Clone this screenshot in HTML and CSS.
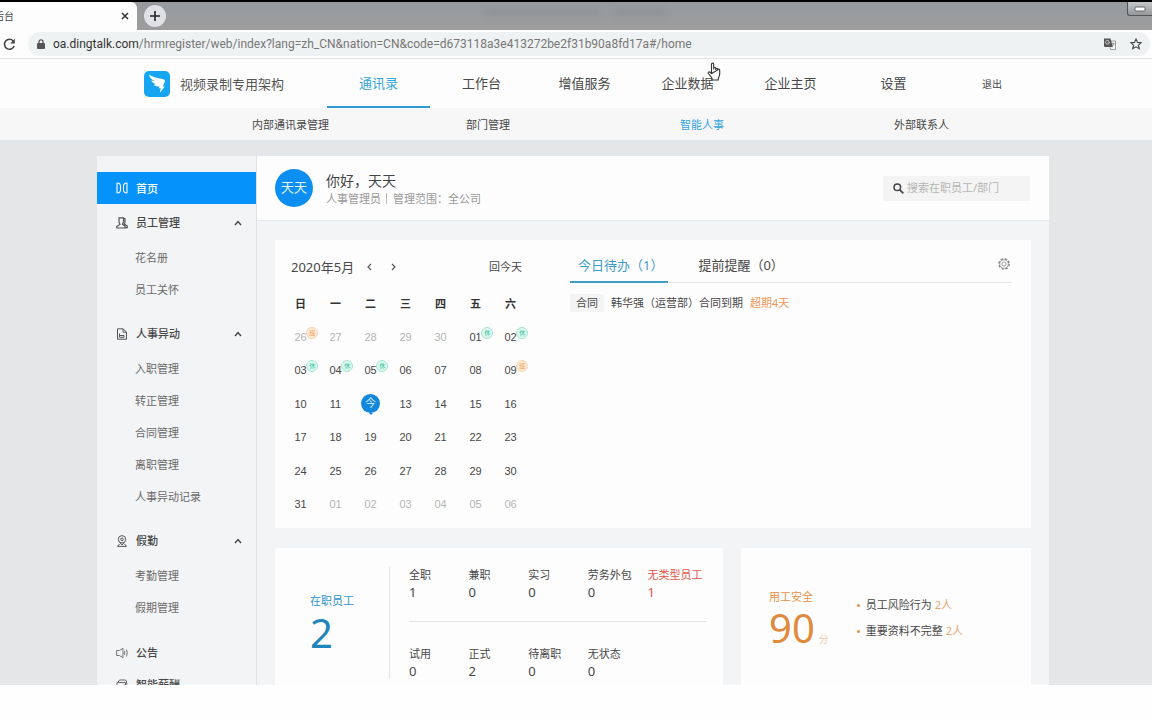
FILE: index.html
```html
<!DOCTYPE html>
<html lang="zh-CN">
<head>
<meta charset="utf-8">
<title>后台</title>
<link rel="stylesheet" href="styles.css">
</head>
<body>
<div class="titlebar">
  <div class="browser-tab">
    <span class="browser-tab-title">后台</span>
    <button class="icon-btn" aria-label="关闭标签页"><svg width="8" height="8" viewBox="0 0 8 8"><path d="M1 1l6 6M7 1l-6 6" stroke="#333" stroke-width="1.5"/></svg></button>
  </div>
  <button class="new-tab" aria-label="新标签页"><svg width="10" height="10" viewBox="0 0 10 10"><path d="M5 0v10M0 5h10" stroke="#222" stroke-width="1.6"/></svg></button>
  <div class="glass"><i class="smudge smudge-wide"></i><i class="smudge"></i></div>
  <button class="win-min" aria-label="最小化"><svg width="12" height="6" viewBox="0 0 12 6"><rect x="1" y="1" width="10" height="4" rx="1" fill="#fff" stroke="#666"/></svg></button>
</div>
<div class="toolbar">
  <button class="icon-btn" aria-label="重新加载"><svg width="13" height="13" viewBox="0 0 13 13"><path d="M10.300 3A5 5 0 1 0 11.200 8" fill="none" stroke="#444" stroke-width="1.600"/><path d="M11.800 .8v4.600H7.200z" fill="#444"/></svg></button>
  <div class="address">
    <svg width="8" height="10" viewBox="0 0 8 10"><rect y="4" width="8" height="6" rx="1" fill="#555"/><path d="M2 4.500V2.800a2 2 0 0 1 4 0v1.700" fill="none" stroke="#555" stroke-width="1.300"/></svg>
    <span class="url"><b>oa.dingtalk.com</b>/hrmregister/web/index?lang=zh_CN&amp;nation=CN&amp;code=d673118a3e413272be2f31b90a8fd17a#/home</span>
    <button class="icon-btn" aria-label="翻译"><svg width="12" height="12" viewBox="0 0 12 12"><path d="M5 3h6.500v8.500H6.500z" fill="#f5f5f5" stroke="#888" stroke-width=".8"/><path d="M0 .5h6.500L9 9H1Q0 9 0 8z" fill="#555"/><path d="M5.500 4H3.800M5.400 4.200A1.900 1.900 0 1 1 4.900 3" fill="none" stroke="#eee" stroke-width=".8"/><path d="M7.500 5.500h3M9 4.800v.8M8 8.500Q9.800 7.500 10 5.600" fill="none" stroke="#777" stroke-width=".7"/></svg></button>
    <button class="icon-btn" aria-label="收藏"><svg width="12" height="12" viewBox="0 0 12 12"><path d="M6 1l1.500 3.400 3.700.3-2.800 2.400.9 3.600L6 8.800l-3.300 1.900.9-3.600L.8 4.700l3.700-.3z" fill="none" stroke="#444" stroke-width="1.100"/></svg></button>
  </div>
</div>
<header class="site-header">
  <div class="brand">
    <svg width="26" height="26" viewBox="0 0 26 26"><rect width="26" height="26" rx="5" fill="#16a5f0"/><path d="M5 3.500Q9 6.500 19.500 8.200Q21.500 8.800 20.800 11L18.700 15.500h2.100L15.800 22l1-4.800h-2.200l.9-1.800Q10.800 15.800 9.800 13.400L12.300 13.200Q8 12 7.300 9.500L10.800 10Q5.500 7.500 5 3.500z" fill="#fff"/></svg>
    <span>视频录制专用架构</span>
  </div>
  <nav class="main-nav">
    <a class="active" href="#">通讯录</a><a href="#">工作台</a><a href="#">增值服务</a><a href="#">企业数据</a><a href="#">企业主页</a><a href="#">设置</a>
  </nav>
  <a class="logout" href="#">退出</a>
  <svg class="pointer" width="14" height="19" viewBox="0 0 14 19"><path d="M4.500 11V2.200a1.100 1.100 0 0 1 2.200 0V7.500M6.700 7V6.300a1 1 0 0 1 2 0V8M8.700 7.200a1 1 0 0 1 2 0V8.500M10.700 8a1 1 0 0 1 2 .3V12Q12.700 14.500 11.300 16V18H5V16L1.200 11.300a1.100 1.100 0 0 1 1.600-1.300L4.500 11.500z" fill="#fff" stroke="#333" stroke-width="1.100"/></svg>
</header>
<nav class="sub-nav">
  <a href="#">内部通讯录管理</a><a href="#">部门管理</a><a class="active" href="#">智能人事</a><a href="#">外部联系人</a>
</nav>
<main class="workspace">
  <div class="shell">
    <aside class="sidebar">
      <a class="home" href="#"><svg class="side-icon" viewBox="0 0 12 12"><path d="M1 1.200Q3.800.5 4.500 3.500V8.500Q3.800 11.500 1 10.800zM11 1.200Q8.200.5 7.500 3.500V8.500Q8.200 11.500 11 10.800z" fill="none" stroke="#fff" stroke-width="1.100"/></svg><span>首页</span></a>
      <section class="group">
        <button class="group-head"><svg class="side-icon" viewBox="0 0 12 12"><path d="M3 .8h4.500v4L6.500 7.300 9 9v2H.8V9.300L4 7.500 3 5zM7.500 1.500H9v4L8.300 7l3 2v1.700H9" fill="none" stroke="#555" stroke-width="1.200"/></svg><span>员工管理</span><svg class="chev" viewBox="0 0 8 6"><path d="M1 5l3-3.500L7 5" fill="none" stroke="#444" stroke-width="1.400"/></svg></button>
        <a href="#">花名册</a><a href="#">员工关怀</a>
      </section>
      <section class="group">
        <button class="group-head"><svg class="side-icon" viewBox="0 0 12 12"><path d="M1.500.8H7L10.500 4v7.200h-9zM7 1v3.200h3.300M3.500 9.300V5.500M3.500 7.500H8v1.800H3.500" fill="none" stroke="#555"/></svg><span>人事异动</span><svg class="chev" viewBox="0 0 8 6"><path d="M1 5l3-3.500L7 5" fill="none" stroke="#444" stroke-width="1.400"/></svg></button>
        <a href="#">入职管理</a><a href="#">转正管理</a><a href="#">合同管理</a><a href="#">离职管理</a><a href="#">人事异动记录</a>
      </section>
      <section class="group">
        <button class="group-head"><svg class="side-icon" viewBox="0 0 12 12"><circle cx="6" cy="4.300" r="3.700" fill="none" stroke="#555"/><circle cx="6" cy="4.300" r="1.300" fill="none" stroke="#555"/><path d="M3.800 7.500L6 10l2.200-2.500M3.500 9L1.500 11.400h9L8.500 9" fill="none" stroke="#555"/></svg><span>假勤</span><svg class="chev" viewBox="0 0 8 6"><path d="M1 5l3-3.500L7 5" fill="none" stroke="#444" stroke-width="1.400"/></svg></button>
        <a href="#">考勤管理</a><a href="#">假期管理</a>
      </section>
      <section class="singles">
        <button class="group-head"><svg class="side-icon" viewBox="0 0 12 12"><path d="M.6 3.500h2.800L7 1.300v9.400L3.400 8.500H.6zM8.700 4v4M10.500 2.500Q12 6 10.500 9.500" fill="none" stroke="#777"/></svg><span>公告</span></button>
        <button class="group-head"><svg class="side-icon" viewBox="0 0 12 12"><path d="M1 11V3.500h8.500V11zM2 3.200L3.500 1H9.500Q10.800 1 10.800 5M7.500 6h3.700v3H7.500z" fill="none" stroke="#666"/></svg><span>智能薪酬</span></button>
      </section>
    </aside>
    <div class="content">
      <div class="greeting">
        <div class="avatar">天天</div>
        <div class="hello"><h1>你好，天天</h1><p><span>人事管理员</span><span class="scope">管理范围：全公司</span></p></div>
        <label class="search"><svg width="11" height="11" viewBox="0 0 11 11"><circle cx="4.300" cy="4.300" r="3.300" fill="none" stroke="#444" stroke-width="1.500"/><path d="M6.800 6.800l3.500 3.500" stroke="#444" stroke-width="1.800"/></svg><input type="text" placeholder="搜索在职员工/部门" aria-label="搜索在职员工/部门"></label>
      </div>
      <div class="board">
        <section class="card agenda">
          <div class="calendar">
            <div class="cal-head">
              <span>2020年5月</span>
              <button class="icon-btn" aria-label="上个月"><svg width="5" height="8" viewBox="0 0 5 8"><path d="M4 1L1 4l3 3" fill="none" stroke="#555" stroke-width="1.200"/></svg></button>
              <button class="icon-btn" aria-label="下个月"><svg width="5" height="8" viewBox="0 0 5 8"><path d="M1 1l3 3-3 3" fill="none" stroke="#555" stroke-width="1.200"/></svg></button>
              <button class="back-today">回今天</button>
            </div>
            <table class="days">
              <thead><tr><th>日</th><th>一</th><th>二</th><th>三</th><th>四</th><th>五</th><th>六</th></tr></thead>
              <tbody>
                <tr><td class="out"><span class="day">26<i class="mark work">班</i></span></td><td class="out">27</td><td class="out">28</td><td class="out">29</td><td class="out">30</td><td><span class="day">01<i class="mark rest">休</i></span></td><td><span class="day">02<i class="mark rest">休</i></span></td></tr>
                <tr><td><span class="day">03<i class="mark rest">休</i></span></td><td><span class="day">04<i class="mark rest">休</i></span></td><td><span class="day">05<i class="mark rest">休</i></span></td><td>06</td><td>07</td><td>08</td><td><span class="day">09<i class="mark work">班</i></span></td></tr>
                <tr><td>10</td><td>11</td><td><span class="today">今</span></td><td>13</td><td>14</td><td>15</td><td>16</td></tr>
                <tr><td>17</td><td>18</td><td>19</td><td>20</td><td>21</td><td>22</td><td>23</td></tr>
                <tr><td>24</td><td>25</td><td>26</td><td>27</td><td>28</td><td>29</td><td>30</td></tr>
                <tr><td>31</td><td class="out">01</td><td class="out">02</td><td class="out">03</td><td class="out">04</td><td class="out">05</td><td class="out">06</td></tr>
              </tbody>
            </table>
          </div>
          <div class="todos">
            <div class="tabs">
              <button class="tab active">今日待办（1）</button><button class="tab">提前提醒（0）</button>
              <button class="icon-btn gear" aria-label="设置"><svg width="12" height="12" viewBox="0 0 12 12"><circle cx="6" cy="6" r="5.200" fill="none" stroke="#777" stroke-width="1.200" stroke-dasharray="2.400 1.684"/><circle cx="6" cy="6" r="4.300" fill="none" stroke="#888" stroke-width=".8"/><circle cx="6" cy="6" r="2" fill="none" stroke="#888" stroke-width=".8"/></svg></button>
            </div>
            <div class="todo"><span class="tag">合同</span><span>韩华强（运营部）合同到期</span><span class="late">超期4天</span></div>
          </div>
        </section>
        <div class="stats">
          <section class="card staff">
            <div class="staff-total"><span>在职员工</span><strong>2</strong></div>
            <div class="staff-kinds">
              <dl><div><dt>全职</dt><dd>1</dd></div><div><dt>兼职</dt><dd>0</dd></div><div><dt>实习</dt><dd>0</dd></div><div><dt>劳务外包</dt><dd>0</dd></div><div class="alert"><dt>无类型员工</dt><dd>1</dd></div></dl>
              <dl><div><dt>试用</dt><dd>0</dd></div><div><dt>正式</dt><dd>2</dd></div><div><dt>待离职</dt><dd>0</dd></div><div><dt>无状态</dt><dd>0</dd></div></dl>
            </div>
          </section>
          <section class="card safety">
            <div class="score"><span>用工安全</span><p><strong>90</strong><small>分</small></p></div>
            <ul><li>员工风险行为 <em>2人</em></li><li>重要资料不完整 <em>2人</em></li></ul>
          </section>
        </div>
      </div>
    </div>
  </div>
</main>
<footer class="blank"></footer>
</body>
</html>
```

FILE: styles.css
```css
* { box-sizing: border-box; }
body {
  margin: 0;
  height: 100vh;
  display: flex;
  flex-direction: column;
  background: #fdfdfd;
  color: #484848;
  font: 11px/16px "Noto Sans", "Noto Sans CJK SC", sans-serif;
}
button, input { font: inherit; color: inherit; border: 0; background: none; padding: 0; margin: 0; }
a { color: inherit; text-decoration: none; }
h1, p, dl, dd, ul { margin: 0; padding: 0; }
svg { display: block; flex: none; }
.icon-btn { display: flex; }

.titlebar {
  flex: none;
  height: 30px;
  display: flex;
  border-top: 2px solid #000;
  background: linear-gradient(#979b9e, #9c9c9c);
}
.browser-tab {
  width: 137px;
  display: flex;
  align-items: center;
  justify-content: space-between;
  padding-right: 8px;
  background: #fdfdfd;
  border-radius: 0 6px 0 0;
  font-size: 10px;
}
.browser-tab-title { width: 14px; display: flex; justify-content: flex-end; overflow: hidden; white-space: nowrap; }
.new-tab {
  width: 22px;
  height: 22px;
  margin: 3px 0 0 7px;
  display: flex;
  align-items: center;
  justify-content: center;
  border-radius: 50%;
  background: #dfe1e4;
}
.glass { flex: 1; display: flex; gap: 14px; padding: 7px 0 0 318px; }
.smudge { width: 52px; height: 6px; background: #8f9294; filter: blur(3px); }
.smudge-wide { width: 116px; }
.win-min {
  width: 25px;
  height: 14px;
  display: flex;
  align-items: center;
  justify-content: center;
  border: 1px solid #555;
  border-width: 0 0 1px 1px;
  border-radius: 0 0 0 3px;
  background: linear-gradient(#c4c6c8, #96999b);
}

.toolbar {
  flex: none;
  height: 29px;
  display: flex;
  align-items: center;
  gap: 12px;
  padding: 0 2px 0 3px;
  border-bottom: 1px solid #dfe1e3;
}
.address {
  flex: 1;
  height: 24px;
  display: flex;
  align-items: center;
  gap: 14px;
  padding: 0 8px 0 9px;
  border-radius: 12px;
  background: #eff2f3;
}
.url { flex: 1; margin-left: -6px; font-family: Roboto, "Noto Sans", sans-serif; font-size: 12px; color: #777; white-space: nowrap; }
.url b { font-weight: 400; color: #333; }

.site-header {
  position: relative;
  flex: none;
  height: 49px;
  display: flex;
  align-items: center;
  padding-left: 144px;
  font-size: 13px;
}
.brand { width: 183px; display: flex; align-items: center; gap: 10px; color: #555; }
.main-nav { display: flex; align-self: stretch; }
.main-nav a { width: 103px; line-height: 48px; text-align: center; border-bottom: 2px solid transparent; }
.main-nav .active { color: #35a5d8; border-color: #2f9bd0; }
.logout { margin-left: 37px; font-size: 10px; }
.pointer { position: absolute; left: 707px; top: 3px; }

.sub-nav {
  flex: none;
  height: 32px;
  display: grid;
  grid-template-columns: repeat(4, 214px);
  align-items: center;
  padding: 1px 0 0 252px;
  background: #f7f7f7;
}
.sub-nav .active { color: #35a5e0; }

.workspace { flex: 1; min-height: 0; overflow: hidden; padding: 16px 6px 0 0; background: #e5e6e8; }
.shell { max-width: 952px; height: 100%; margin: 0 auto; display: flex; background: #f3f4f6; }

.sidebar { flex: none; width: 160px; padding-top: 16px; overflow: hidden; border-right: 1px solid #e2e3e5; }
.sidebar a { display: block; padding-left: 38px; line-height: 33px; height: 32px; color: #6a6a6a; }
.sidebar .home { display: flex; align-items: center; gap: 8px; padding-left: 19px; background: #0593fb; color: #fff; font-weight: 500; }
.side-icon { width: 12px; height: 12px; }
.group { margin-bottom: 10px; }
.group-head { width: 100%; height: 37px; display: flex; align-items: center; gap: 8px; padding: 1px 14px 0 19px; font-weight: 500; }
.chev { width: 8px; height: 6px; margin-left: auto; }
.singles { padding-top: 3px; }
.singles .group-head { height: 32px; }

.content { flex: 1; min-width: 0; }
.greeting { height: 65px; display: flex; align-items: center; padding: 0 19px 0 18px; background: #fdfdfd; border-bottom: 1px solid #e6e7e9; }
.avatar { width: 38px; height: 38px; border-radius: 50%; background: #0c8ff0; color: #e6f6ff; font-size: 13px; line-height: 36px; text-align: center; }
.hello { margin-left: 13px; padding-top: 2px; color: #999; font-family: "Noto Sans", "Noto Sans CJK TC", sans-serif; }
.hello h1 { font-size: 14px; line-height: 20px; font-weight: 400; color: #444; }
.scope { margin-left: 5px; padding-left: 6px; border-left: 1px solid #bbb; line-height: 11px; display: inline-block; }
.search { width: 147px; height: 25px; margin-left: auto; display: flex; align-items: center; gap: 3px; padding: 0 10px; background: #f4f4f4; }
.search input { flex: 1; min-width: 0; outline: 0; }
.search input::placeholder { color: #b5b5b5; }

.board { padding: 19px 18px 0; display: flex; flex-direction: column; gap: 20px; }
.card { background: #fdfdfd; }
.agenda { display: flex; padding: 16px 19px 7px 8px; }
.calendar { width: 245px; }
.cal-head { height: 22px; display: flex; align-items: center; gap: 19px; padding: 0 6px 0 8px; margin-bottom: 9px; }
.cal-head span { font-size: 13px; margin-right: -6px; }
.back-today { margin-left: auto; }
.days { width: 100%; height: 234px; table-layout: fixed; border-collapse: collapse; text-align: center; font-family: "Liberation Sans", "Noto Sans CJK SC", sans-serif; }
.days tr { height: 33px; }
.days th, .days td { padding: 0; }
.days th { font-weight: 700; color: #333; }
.days .out { color: #b5b5b5; }
.day { position: relative; }
.mark {
  position: absolute;
  left: 12px;
  top: -4px;
  width: 12px;
  height: 12px;
  border: 1px solid;
  border-radius: 50%;
  font: normal 6px/10px "Noto Sans CJK SC", sans-serif;
  text-align: center;
}
.rest { color: #2fbf97; border-color: #a5e6d3; background: #dcf7ef; }
.work { color: #ee9a50; border-color: #f8d3ae; background: #fdebd9; }
.today { position: relative; display: block; width: 19px; height: 19px; margin: 0 auto; border-radius: 50%; background: #1287dc; color: #d5f1ff; line-height: 19px; }
.today::after { content: ""; position: absolute; left: 8px; bottom: -2px; border: 2px solid transparent; border-top-color: #1287dc; border-bottom: 0; }

.todos { flex: 1; margin-left: 42px; }
.tabs { height: 27px; display: flex; gap: 22px; border-bottom: 1px solid #e6e6e6; font-size: 13px; }
.tab { height: 27px; padding: 0 5px 8px 8px; border-bottom: 2px solid transparent; white-space: nowrap; }
.tab.active { color: #3f9cc8; border-color: #3f9cc4; }
.gear { margin: 2px 2px 0 auto; align-self: flex-start; }
.todo { display: flex; align-items: center; gap: 7px; margin-top: 11px; }
.tag { padding: 1px 6px; background: #f4f4f4; }
.late { color: #f0965a; }

.stats { display: grid; grid-template-columns: 448fr 290fr; gap: 18px; }
.stats .card { height: 150px; display: flex; }
.staff { padding: 19px 16px 19px 0; }
.staff-total { width: 115px; padding: 26px 0 0 35px; border-right: 1px solid #e4e4e4; color: #2f93c6; }
.staff-total strong { display: block; }
strong { font-size: 40px; line-height: 48px; font-weight: 400; }
.staff-total strong { color: #2184bb; }
.staff-kinds { flex: 1; margin-left: 19px; }
.staff-kinds dl { height: 54px; display: grid; grid-template-columns: repeat(5, 1fr); white-space: nowrap; }
.staff-kinds dl + dl { padding-top: 24px; border-top: 1px solid #e4e4e4; }
.staff-kinds dd { font-size: 13px; line-height: 18px; }
.alert { color: #e2574c; }
.safety { padding: 41px 0 0 28px; gap: 28px; color: #e79147; }
.score p { display: flex; align-items: baseline; gap: 4px; }
.score strong { line-height: 46px; color: #e08a3e; }
.score small { font-size: 10px; color: #f3c9a8; }
.safety ul { list-style: none; padding-top: 3px; color: #484848; }
.safety li { height: 26px; display: flex; align-items: center; gap: 3px; }
.safety li::before { content: ""; width: 3px; height: 3px; margin-right: 3px; border-radius: 50%; background: #e79147; }
.safety em { font-style: normal; color: #e8a56f; }
.blank { flex: none; height: 35px; background: #fefefe; }
```
